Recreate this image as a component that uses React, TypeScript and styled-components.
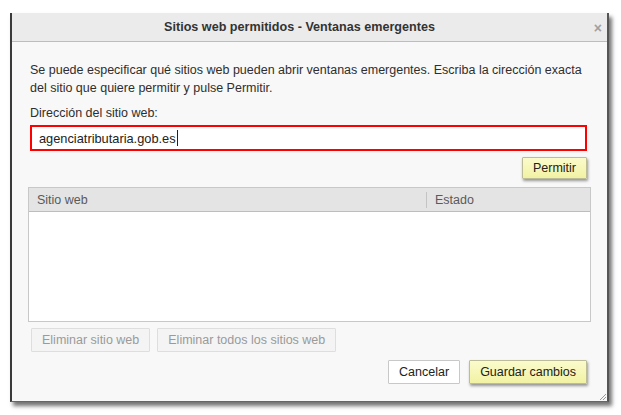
import React from "react";
import styled, { createGlobalStyle } from "styled-components";

const GlobalStyle = createGlobalStyle`
  html, body {
    margin: 0;
    padding: 0;
    background: #ffffff;
  }
  body {
    font-family: "Liberation Sans", Arial, sans-serif;
    color: #333333;
  }
`;

const Page = styled.div`
  width: 621px;
  height: 415px;
  padding: 13px 0 0 10px;
  box-sizing: border-box;
`;

const Window = styled.div`
  width: 599px;
  height: 389px;
  box-sizing: border-box;
  display: flex;
  flex-direction: column;
  background: #f8f8f8;
  border-left: 2px solid #3a3a3a;
  border-right: 2px solid #555555;
  border-bottom: 1px solid #666666;
  box-shadow: 3px 4px 4px rgba(0, 0, 0, 0.55);
  position: relative;
`;

const TitleBar = styled.div`
  height: 29px;
  flex: none;
  box-sizing: border-box;
  display: flex;
  align-items: center;
  justify-content: center;
  padding-right: 20px;
  background: #ebebeb;
  border-bottom: 1px solid #bdbdbd;
  position: relative;
`;

const Title = styled.div`
  font-size: 12.6px;
  font-weight: bold;
  color: #333333;
`;

const Close = styled.span`
  position: absolute;
  right: 5px;
  top: 7px;
  font-size: 14px;
  font-weight: bold;
  color: #a0a0a0;
`;

const Body = styled.div`
  flex: 1;
  display: flex;
  flex-direction: column;
  padding: 19px 16px 0 16px;
`;

const Text = styled.p`
  margin: 0 0 0 2px;
  font-size: 12.5px;
  line-height: 18px;
  color: #2e2e2e;
`;

const Label = styled(Text)`
  margin-top: 7px;
`;

const Input = styled.div`
  margin: 3px 4px 0 2px;
  height: 26px;
  box-sizing: border-box;
  display: flex;
  align-items: center;
  padding-left: 7px;
  background: #ffffff;
  border: 2.5px solid #ff0000;
  font-size: 12.8px;
  color: #222222;
`;

const Caret = styled.span`
  display: inline-block;
  width: 1px;
  height: 16px;
  background: #222222;
  margin-left: 1px;
`;

const Row = styled.div<{ $justify?: string; $top: number; $gap: number }>`
  display: flex;
  justify-content: ${(p) => p.$justify || "flex-start"};
  gap: ${(p) => p.$gap}px;
  margin-top: ${(p) => p.$top}px;
`;

const Button = styled.button<{ $primary?: boolean; $disabled?: boolean }>`
  height: 24px;
  box-sizing: border-box;
  padding: 0 10px;
  font-family: "Liberation Sans", Arial, sans-serif;
  font-size: 12.5px;
  color: ${(p) => (p.$disabled ? "#9a9a9a" : "#222222")};
  background: ${(p) =>
    p.$primary
      ? "linear-gradient(#fbfbcc, #f2f2a4)"
      : p.$disabled
      ? "#f4f4f4"
      : "#ffffff"};
  border: 1px solid
    ${(p) => (p.$primary ? "#bcbc98" : p.$disabled ? "#dedede" : "#c8c8c8")};
  border-radius: 1px;
  box-shadow: ${(p) =>
    p.$primary ? "1px 2px 3px rgba(0, 0, 0, 0.4)" : "none"};
`;

const Table = styled.div`
  margin-top: 8px;
  height: 135px;
  box-sizing: border-box;
  display: flex;
  flex-direction: column;
  border: 1px solid #c8c8c8;
  background: #ffffff;
`;

const Header = styled.div`
  height: 24px;
  flex: none;
  box-sizing: border-box;
  display: grid;
  grid-template-columns: 397px 1fr;
  align-items: center;
  background: #e4e4e4;
  border-bottom: 1px solid #bdbdbd;
`;

const HeadCell = styled.div<{ $divider?: boolean }>`
  font-size: 12.5px;
  color: #5a5a5a;
  padding-left: ${(p) => (p.$divider ? "8px" : "8px")};
  border-left: ${(p) => (p.$divider ? "1px solid #c4c4c4" : "none")};
  line-height: 16px;
`;

const Grip = styled.svg`
  position: absolute;
  right: 0;
  bottom: 0;
`;

export default function App() {
  return (
    <>
      <GlobalStyle />
      <Page>
        <Window>
          <TitleBar>
            <Title>Sitios web permitidos - Ventanas emergentes</Title>
            <Close>×</Close>
          </TitleBar>
          <Body>
            <Text>
              Se puede especificar qué sitios web pueden abrir ventanas
              emergentes. Escriba la cirección exacta del sitio que quiere
              permitir y pulse Permitir.
            </Text>
            <Label>Dirección del sitio web:</Label>
            <Input>
              agenciatributaria.gob.es
              <Caret />
            </Input>
            <Row $justify="flex-end" $top={6} $gap={8} style={{ marginRight: 4 }}>
              <Button $primary style={{ height: 22 }}>
                Permitir
              </Button>
            </Row>
            <Table>
              <Header>
                <HeadCell>Sitio web</HeadCell>
                <HeadCell $divider>Estado</HeadCell>
              </Header>
            </Table>
            <Row $top={6} $gap={7} style={{ marginLeft: 3 }}>
              <Button $disabled>Eliminar sitio web</Button>
              <Button $disabled>Eliminar todos los sitios web</Button>
            </Row>
            <Row $justify="flex-end" $top={8} $gap={9} style={{ marginRight: 4 }}>
              <Button>Cancelar</Button>
              <Button $primary>Guardar cambios</Button>
            </Row>
          </Body>
          <Grip width="10" height="10" viewBox="0 0 10 10">
            <path d="M9 3 L3 9 M9 6 L6 9" stroke="#9a9a9a" strokeWidth="1" />
          </Grip>
        </Window>
      </Page>
    </>
  );
}
